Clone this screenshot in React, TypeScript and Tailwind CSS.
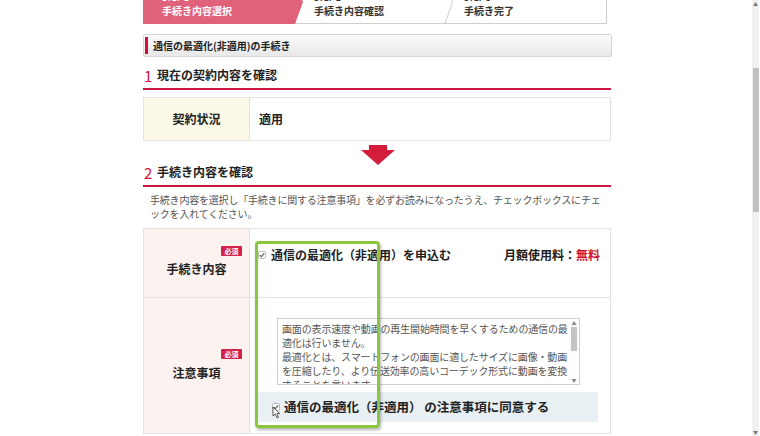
import React from 'react';

const font = { fontFamily: '"Noto Sans CJK JP", "Noto Sans", sans-serif' };

const Step = ({ label, step, first, last, z }: { label: string; step: string; first?: boolean; last?: boolean; z: string }) => {
  const w = last ? 162 : first ? 160 : 158;
  return (
    <div className={`relative h-[44px] shrink-0 ${first ? '' : '-ml-[8px]'} ${z}`} style={{ width: w }}>
      <svg className="absolute inset-0" width={w} height={44} viewBox={`0 0 ${w} 44`}>
        {first ? (
          <polygon points={`0,0 ${w - 8},0 ${w},22 ${w - 8},44 0,44`} fill="#e0627a" />
        ) : last ? (
          <rect x="0.5" y="0.5" width={w - 1} height="43" fill="#fff" stroke="#cfcfcf" />
        ) : (
          <polygon points={`0.5,0.5 ${w - 8},0.5 ${w - 0.5},22 ${w - 8},43.5 0.5,43.5`} fill="#fff" stroke="#cfcfcf" />
        )}
      </svg>
      <div className={`relative flex flex-col pl-[19px] pt-[13px] ${first ? 'text-white' : 'text-[#333]'}`}>
        <span className="text-[8px] leading-[10px] font-bold">{step}</span>
        <span className="text-[10px] leading-[14px] font-bold mt-[1px]">{label}</span>
      </div>
    </div>
  );
};

const Badge = () => (
  <span className="inline-flex items-center justify-center w-[21px] h-[10px] bg-[#d2234a] text-white text-[7px] font-bold leading-none rounded-[1px]">
    必須
  </span>
);

const SmallCheck = () => (
  <svg width="8" height="8" viewBox="0 0 8 8" className="shrink-0">
    <rect x="0.5" y="0.5" width="7" height="7" rx="1" fill="#fff" stroke="#b9b9b9" />
    <path d="M1.8 4.1 L3.3 5.6 L6.2 2.4" fill="none" stroke="#555" strokeWidth="1.1" />
  </svg>
);

const SectionHeading = ({ n, text }: { n: string; text: string }) => (
  <div className="flex items-center h-[16px] pl-[1px] box-content pb-[5px] border-b-2 border-[#c8163c]">
    <span className="text-[15px] leading-none text-[#d0103a] w-[13px]">{n}</span>
    <span className="text-[12px] font-bold text-[#222] leading-none">{text}</span>
  </div>
);

const noteLines = [
  '画面の表示速度や動画の再生開始時間を早くするための通信の最',
  '適化は行いません。',
  '最適化とは、スマートフォンの画面に適したサイズに画像・動画',
  'を圧縮したり、より伝送効率の高いコーデック形式に動画を変換',
  'することを言います。',
];

export default function App() {
  return (
    <div className="relative w-[760px] h-[436px] overflow-hidden bg-white flex text-[#222]" style={font}>
      <div className="flex-1 pl-[143px]">
        <div className="w-[468px]">
          {/* steps */}
          <div className="h-[24px] overflow-hidden flex items-end">
            <div className="flex">
              <Step first step="STEP 1" label="手続き内容選択" z="z-30" />
              <Step step="STEP 2" label="手続き内容確認" z="z-20" />
              <Step last step="STEP 3" label="手続き完了" z="z-10" />
            </div>
          </div>

          {/* title bar */}
          <div className="mt-[10px] h-[23px] w-[469px] flex items-center rounded-[2px] border border-[#d6d6d6] bg-gradient-to-b from-[#fbfbfb] to-[#e8e8e8] pl-[1px]">
            <div className="w-[3px] h-[17px] bg-[#d0103a]" />
            <span className="ml-[5px] text-[10px] font-bold text-[#222]">通信の最適化(非適用)の手続き</span>
          </div>

          {/* section 1 */}
          <div className="mt-[10px]">
            <SectionHeading n="1" text="現在の契約内容を確認" />
          </div>
          <div className="mt-[7px] flex h-[44px] border border-[#e3e3e3]">
            <div className="w-[106px] bg-[#fcf9e9] border-r border-[#e3e3e3] flex items-center justify-center text-[12px] font-bold">
              契約状況
            </div>
            <div className="flex-1 flex items-center pl-[9px] text-[12px] font-bold">適用</div>
          </div>

          {/* arrow */}
          <div className="flex justify-center h-[20px] pt-[4px] box-content">
            <svg width="34" height="20" viewBox="0 0 34 20" className="ml-[1px]">
              <rect x="8" y="0" width="18" height="6" fill="#d41c3c" />
              <polygon points="0,5 34,5 17,20" fill="#d41c3c" />
            </svg>
          </div>

          {/* section 2 */}
          <div className="-mt-[1px]">
            <SectionHeading n="2" text="手続き内容を確認" />
          </div>
          <p className="mt-[6px] px-[7px] text-[10px] leading-[14px] text-[#555] whitespace-nowrap tracking-[-0.2px]">
            手続き内容を選択し「手続きに関する注意事項」を必ずお読みになったうえ、チェックボックスにチェ
            <br />
            ックを入れてください。
          </p>

          {/* table 2 */}
          <div className="mt-[7px] border border-[#e3e3e3]">
            <div className="flex h-[69px] border-b border-[#e3e3e3]">
              <div className="w-[106px] bg-[#fcf2ef] border-r border-[#e3e3e3] flex flex-col pt-[17px]">
                <div className="flex justify-end pr-[7px]">
                  <Badge />
                </div>
                <div className="text-center text-[12px] font-bold mt-[4px]">手続き内容</div>
              </div>
              <div className="flex-1 flex items-start pt-[18px] pl-[8px] pr-[10px]">
                <div className="flex items-center gap-[5px] h-[16px]">
                  <SmallCheck />
                  <span className="text-[12px] font-bold">通信の最適化（非適用）を申込む</span>
                </div>
                <div className="ml-auto h-[16px] flex items-center text-[12px] font-bold">
                  月額使用料：<span className="text-[#d0103a]">無料</span>
                </div>
              </div>
            </div>
            <div className="flex h-[135px]">
              <div className="w-[106px] bg-[#fcf2ef] border-r border-[#e3e3e3] flex flex-col pt-[51px]">
                <div className="flex justify-end pr-[7px]">
                  <Badge />
                </div>
                <div className="text-center text-[12px] font-bold mt-[5px]">注意事項</div>
              </div>
              <div className="flex-1 flex flex-col pt-[20px] pl-[8px] pr-[12px]">
                <div className="ml-[19px] w-[303px] h-[67px] border border-[#cfcfcf] flex overflow-hidden">
                  <div className="flex-1 pl-[4px] pt-[3px] text-[10px] leading-[14px] text-[#555] whitespace-nowrap tracking-[-0.15px] overflow-hidden">
                    {noteLines.map((l, i) => (
                      <div key={i}>{l}</div>
                    ))}
                  </div>
                  <div className="w-[10px] flex flex-col items-center bg-white">
                    <span className="text-[5px] leading-[8px] text-[#888]">▲</span>
                    <div className="w-[6px] h-[24px] bg-[#c4c4c4]" />
                    <div className="flex-1" />
                    <span className="text-[5px] leading-[8px] text-[#888]">▼</span>
                  </div>
                </div>
                <div className="mt-[7px] h-[30px] bg-[#e9f0f4] flex items-center pl-[14px]">
                  <div className="relative">
                    <SmallCheck />
                    <svg className="absolute left-[0px] top-[3px]" width="9" height="13" viewBox="0 0 9 13">
                      <path d="M1 1 L1 10 L3.2 8 L5 12 L6.5 11.3 L4.8 7.5 L7.8 7.5 Z" fill="#fff" stroke="#333" strokeWidth="0.8" />
                    </svg>
                  </div>
                  <span className="ml-[4px] text-[12.5px] font-bold">通信の最適化（非適用） の注意事項に同意する</span>
                </div>
              </div>
            </div>
          </div>
        </div>
      </div>

      {/* page scrollbar */}
      <div className="w-[7px] mr-[1px] h-full bg-[#f0f0f0] flex flex-col items-center">
        <span className="text-[5px] leading-[8px] text-[#777]">▲</span>
        <div className="mt-[60px] w-[6px] h-[144px] bg-[#c2c2c2]" />
        <div className="flex-1" />
        <span className="text-[5px] leading-[8px] text-[#777]">▼</span>
      </div>

      {/* highlight annotation */}
      <div className="absolute left-[255px] top-[241px] w-[125px] h-[187px] border-[3px] border-[#8cc63f] rounded-[4px] shadow-[1px_2px_3px_rgba(0,0,0,0.3)]" />
    </div>
  );
}
